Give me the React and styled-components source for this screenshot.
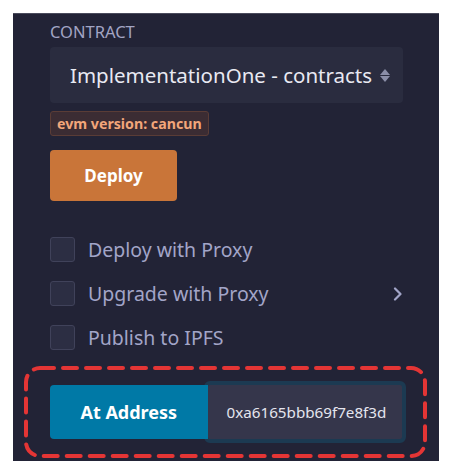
import styled, { createGlobalStyle } from 'styled-components';

const Global = createGlobalStyle`
    body {
        margin: 0;
        background: #ffffff;
        font-family: "Noto Sans", "Open Sans", sans-serif;
    }
`;

const Panel = styled.div`
    margin: 13px 0 0 13px;
    width: 426px;
    height: 448px;
    box-sizing: border-box;
    background: #222336;
    border-top: 1px solid #4a4b5c;
    padding: 8px 0 0 37px;
    display: flex;
    flex-direction: column;
`;

const Label = styled.div`
    font-size: 16.5px;
    line-height: 20px;
    color: #a2a5c4;
`;

const SelectBox = styled.div`
    margin-top: 5px;
    width: 353px;
    height: 56px;
    box-sizing: border-box;
    background: #2a2c3f;
    border-radius: 4px;
    display: flex;
    align-items: center;
    padding: 0 13px 0 20px;
    gap: 2px;
`;

const SelectText = styled.span`
    flex: 1;
    font-size: 20.5px;
    color: #e8e9f2;
    white-space: nowrap;
    overflow: hidden;
`;

const Arrows = styled.div`
    display: flex;
    flex-direction: column;
    gap: 1px;
`;

const Badge = styled.div`
    margin-top: 8px;
    align-self: flex-start;
    height: 25px;
    box-sizing: border-box;
    padding: 0 6px;
    display: flex;
    align-items: center;
    background: #3b2c33;
    border: 1px solid #5a3c36;
    border-radius: 3px;
    font-size: 14.2px;
    font-weight: 700;
    color: #f2a67a;
`;

const DeployButton = styled.button`
    margin-top: 14px;
    width: 127px;
    height: 51px;
    border: none;
    border-radius: 4px;
    background: #c97539;
    color: #ffffff;
    font-family: inherit;
    font-size: 17px;
    font-weight: 700;
    cursor: pointer;
`;

const Options = styled.div`
    margin-top: 36px;
    width: 353px;
    display: flex;
    flex-direction: column;
    gap: 19px;
`;

const Row = styled.label`
    display: flex;
    align-items: center;
    height: 25px;
    gap: 13px;
`;

const Box = styled.span`
    width: 25px;
    height: 25px;
    box-sizing: border-box;
    background: #2c2e43;
    border: 1px solid #40425a;
    border-radius: 3px;
`;

const RowText = styled.span`
    flex: 1;
    font-size: 19.5px;
    color: #a2a5c8;
`;

const Annotated = styled.div`
    position: relative;
    margin: 16px 0 0 -26px;
    width: 403px;
    height: 92px;
    box-sizing: border-box;
    padding: 15px 0 0 22px;
`;

const Dashes = styled.svg`
    position: absolute;
    inset: 0;
    pointer-events: none;
`;

const AddressGroup = styled.div`
    display: flex;
    align-items: center;
    width: 360px;
    height: 62px;
`;

const AtButton = styled.button`
    position: relative;
    z-index: 1;
    margin-left: 4px;
    width: 158px;
    height: 54px;
    border: none;
    border-radius: 4px 0 0 4px;
    background: #0079a6;
    color: #ffffff;
    font-family: inherit;
    font-size: 18px;
    font-weight: 700;
`;

const AddressInput = styled.div`
    margin-left: -4px;
    width: 203px;
    height: 62px;
    box-sizing: border-box;
    border: 4px solid #1c3a52;
    border-radius: 6px;
    background: #35364b;
    display: flex;
    align-items: center;
    padding-left: 19px;
    font-size: 15.2px;
    color: #e4e5ee;
`;

const options = [
    { text: 'Deploy with Proxy' },
    { text: 'Upgrade with Proxy', more: true },
    { text: 'Publish to IPFS' },
];

export default function App() {
    return (
        <>
            <Global />
            <Panel>
                <Label>CONTRACT</Label>
                <SelectBox>
                    <SelectText>ImplementationOne - contracts</SelectText>
                    <Arrows>
                        <svg width="10" height="6" viewBox="0 0 10 6">
                            <path d="M5 0 L10 6 L0 6 Z" fill="#8b8ea8" />
                        </svg>
                        <svg width="10" height="6" viewBox="0 0 10 6">
                            <path d="M0 0 L10 0 L5 6 Z" fill="#8b8ea8" />
                        </svg>
                    </Arrows>
                </SelectBox>
                <Badge>evm version: cancun</Badge>
                <DeployButton>Deploy</DeployButton>
                <Options>
                    {options.map((o) => (
                        <Row key={o.text}>
                            <Box />
                            <RowText>{o.text}</RowText>
                            {o.more && (
                                <svg width="10" height="14" viewBox="0 0 10 14">
                                    <path d="M2 1.5 L7.5 7 L2 12.5" fill="none" stroke="#a2a5c8" strokeWidth="2.2" strokeLinecap="round" strokeLinejoin="round" />
                                </svg>
                            )}
                        </Row>
                    ))}
                </Options>
                <Annotated>
                    <Dashes width="403" height="92" viewBox="0 0 403 92">
                        <rect x="2" y="2" width="399" height="88" rx="14" fill="none" stroke="#e43535" strokeWidth="4" strokeDasharray="14 9" strokeLinecap="round" />
                    </Dashes>
                    <AddressGroup>
                        <AtButton>At Address</AtButton>
                        <AddressInput>0xa6165bbb69f7e8f3d</AddressInput>
                    </AddressGroup>
                </Annotated>
            </Panel>
        </>
    );
}
